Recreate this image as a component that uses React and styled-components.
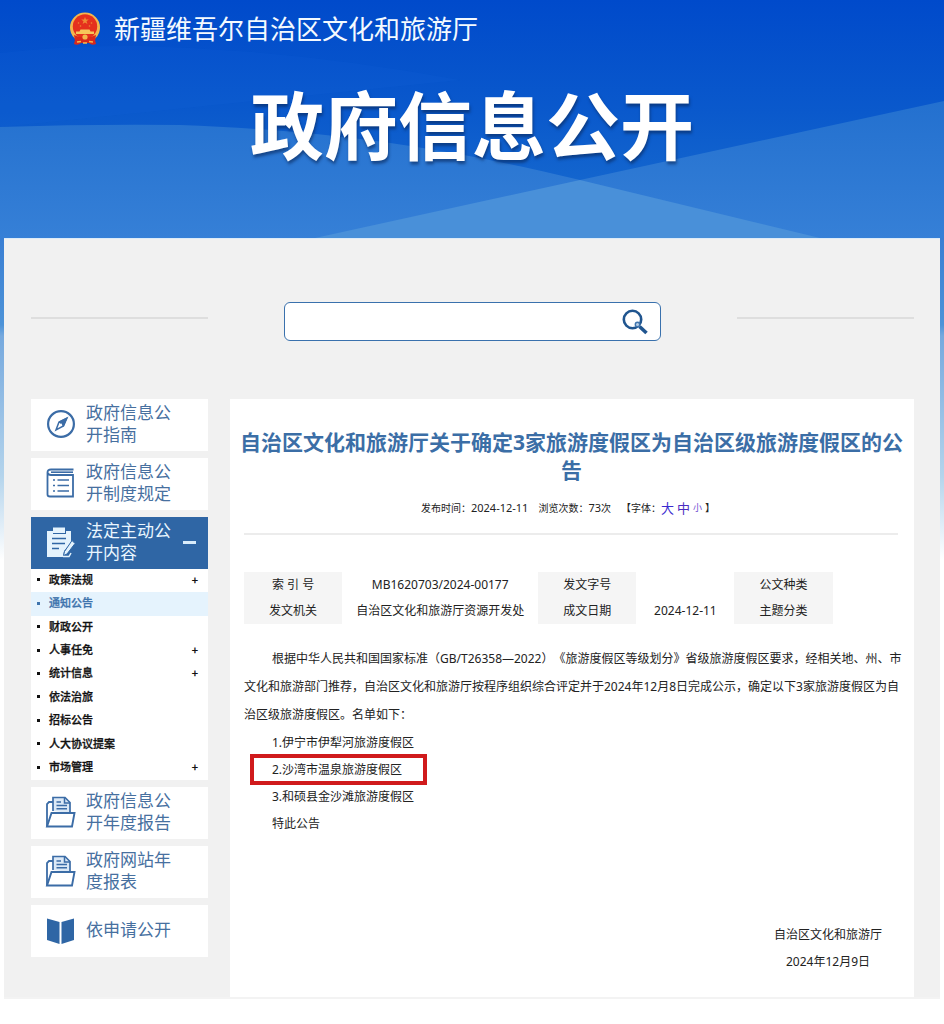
import React, { useState } from "react";
import styled, { createGlobalStyle, css } from "styled-components";

const GlobalStyle = createGlobalStyle`
  *, *::before, *::after { box-sizing: border-box; }
  body {
    margin: 0;
    background: #fff;
    color: #222;
    font-family: "Noto Sans", "Noto Sans CJK SC", sans-serif;
    font-size: 12px;
    text-spacing-trim: space-all;
  }
  a { color: inherit; text-decoration: none; }
  h1, h2, p, ul, ol { margin: 0; padding: 0; }
  ul, ol { list-style: none; }
`;

const Page = styled.div`
  position: relative;
  isolation: isolate;
  padding-bottom: 26px;
`;

const Backdrop = styled.svg`
  position: absolute;
  z-index: -1;
  top: 0;
  left: 0;
  width: 100%;
  height: 560px;
  display: block;
`;

const Header = styled.header`
  height: 238px;
  padding-top: 11px;
  color: #fff;
`;

const SiteLink = styled.a`
  display: flex;
  align-items: center;
  gap: 13px;
  height: 36px;
  padding-left: 69px;
  font-size: 26px;
  line-height: 36px;
  color: #f4faff;
`;

const Banner = styled.h1`
  padding-top: 24px;
  font-size: 74px;
  line-height: 110px;
  font-weight: 700;
  text-align: center;
  text-shadow: 1px 3px 3px rgba(10, 40, 90, 0.6);
`;

const Panel = styled.div`
  margin: 0 4px;
  padding: 63px 26px 0 27px;
  background: #f1f1f1;
  border-top: 1px solid #dcebf8;
  border-bottom: 2px solid #f3f3f3;
`;

const SearchRow = styled.div`
  display: grid;
  grid-template-columns: 177px minmax(0, 377px) 177px;
  justify-content: space-between;
  align-items: center;
  margin-bottom: 58px;
`;

const Rule = styled.div`
  height: 2px;
  margin-bottom: 8px;
  background: #dedede;
`;

const SearchBox = styled.form`
  display: flex;
  align-items: center;
  height: 39px;
  padding-right: 11px;
  background: #fff;
  border: 1px solid #3a71ad;
  border-radius: 6px;
`;

const SearchInput = styled.input`
  flex: 1;
  min-width: 0;
  height: 100%;
  padding: 0 12px;
  border: 0;
  outline: 0;
  background: transparent;
  font: inherit;
  font-size: 14px;
`;

const IconButton = styled.button`
  display: flex;
  padding: 0;
  border: 0;
  background: none;
  cursor: pointer;
`;

const Columns = styled.div`
  display: grid;
  grid-template-columns: 177px minmax(0, 1fr);
  gap: 22px;
`;

const SideNav = styled.nav`
  display: flex;
  flex-direction: column;
  gap: 7px;
`;

const cardStyle = css`
  display: flex;
  align-items: center;
  gap: 9px;
  width: 100%;
  height: 52px;
  padding: 0 10px 2px 14px;
  border: 0;
  font-family: inherit;
  font-size: 17px;
  line-height: 22px;
  text-align: left;
`;

const NavCard = styled.a`
  ${cardStyle}
  background: #fff;
  color: #47709f;
`;

const NavToggle = styled.button`
  ${cardStyle}
  background: #2f66a5;
  color: #eaf6ff;
  cursor: pointer;
`;

const NavLabel = styled.span`
  width: 88px;
  white-space: pre-line;
`;

const NavIcon = styled.svg`
  flex: none;
  width: 32px;
  height: 32px;
  fill: none;
  stroke: currentColor;
  color: ${(p) => p.$color || "#3b6ca6"};
`;

const Minus = styled.span`
  width: 13px;
  height: 3px;
  background: #d9ecfb;
`;

const SubList = styled.ul`
  display: grid;
  grid-auto-rows: 1fr;
  min-height: 211px;
  background: #fff;
`;

const SubLink = styled.a`
  display: flex;
  align-items: center;
  height: 100%;
  padding: 0 10px 2px 6px;
  font-size: 11px;
  line-height: 20px;
  font-weight: 500;
  color: ${(p) => (p.$current ? "#3f74ad" : "#111")};
  background: ${(p) => (p.$current ? "#e5f3fd" : "transparent")};
  -webkit-text-stroke: 0.3px currentColor;

  &::before {
    content: "";
    width: 3px;
    height: 3px;
    margin-right: 9px;
    background: currentColor;
  }
`;

const Plus = styled.span`
  margin-left: auto;
`;

const Article = styled.main`
  display: flex;
  flex-direction: column;
  padding: 29px 11px 22px 14px;
  background: #fff;
`;

const Title = styled.h2`
  margin: 0 -6px 0 -10px;
  font-size: 21px;
  line-height: 28px;
  font-weight: 700;
  text-align: center;
  color: #3b6ea6;
`;

const Meta = styled.div`
  display: flex;
  justify-content: center;
  align-items: center;
  gap: 10px;
  height: 51px;
  margin-right: 5px;
  padding: 0 6px 2px 0;
  font-size: 10px;
  line-height: 20px;
  border-bottom: 2px solid #ececec;
`;

const Num = styled.span`
  font-size: 11px;
`;

const SizeGroup = styled.span`
  display: flex;
  align-items: center;
`;

const SizeButton = styled.button`
  padding: 0;
  margin-right: 3px;
  border: 0;
  background: none;
  font-family: inherit;
  font-size: ${(p) => p.$size}px;
  line-height: 20px;
  color: ${(p) => p.$color};
  cursor: pointer;
`;

const InfoTable = styled.table`
  width: calc(100% - 5px);
  margin: 37px 0 21px;
  table-layout: fixed;
  border-collapse: collapse;
  line-height: 20px;
  text-align: center;

  th, td {
    height: 26px;
    padding: 0;
    font-weight: 400;
    white-space: nowrap;
  }
  th { background: #f5f5f5; }
`;

const Paragraph = styled.p`
  line-height: 28px;
  text-indent: 28px;
`;

const Lines = styled.ol`
  padding-left: 28px;
  line-height: 27px;
`;

const Marked = styled.span`
  position: relative;
  display: inline-block;

  &::after {
    content: "";
    position: absolute;
    inset: -2px -25px -2px -22px;
    border: 4px solid #d01a1c;
  }
`;

const Signature = styled.div`
  align-self: flex-end;
  margin: 84px 21px 0 0;
  line-height: 27px;
  text-align: center;
`;

function BackdropArt() {
  return (
    <Backdrop viewBox="0 0 944 560" preserveAspectRatio="none" aria-hidden="true">
      <defs>
        <linearGradient id="sky" gradientUnits="userSpaceOnUse" x1="0" y1="0" x2="0" y2="560">
          <stop offset="0" stopColor="#004acb" />
          <stop offset="0.2" stopColor="#0a59cc" />
          <stop offset="0.32" stopColor="#1365ce" />
          <stop offset="0.43" stopColor="#3a7fd3" />
          <stop offset="0.58" stopColor="#4d93d8" />
          <stop offset="0.6" stopColor="#76a9de" />
          <stop offset="0.85" stopColor="#b4d4ec" />
          <stop offset="1" stopColor="#fff" />
        </linearGradient>
        <linearGradient id="fold" gradientUnits="userSpaceOnUse" x1="0" y1="100" x2="0" y2="240">
          <stop offset="0" stopColor="#2370cf" />
          <stop offset="1" stopColor="#3680d7" />
        </linearGradient>
      </defs>
      <rect width="944" height="560" fill="url(#sky)" />
      <path d="M0 53Q70 45 140 46Q300 50 460 80L0 127Z" fill="#1a6ae0" opacity=".1" />
      <path d="M0 127Q90 124 180 125C320 130 440 146 580 180L820 238H0Z" fill="url(#fold)" />
      <path d="M944 101L580 180L315 238H944Z" fill="url(#fold)" />
      <path d="M580 180L820 238H315Z" fill="#4990d9" />
    </Backdrop>
  );
}

function Emblem() {
  return (
    <svg width="32" height="34" viewBox="0 0 32 34" aria-hidden="true">
      <path d="M7 24L5 32Q9 34 12 31H20Q23 34 27 32L25 24Z" fill="#d8281c" />
      <circle cx="16" cy="15.500" r="15" fill="#f3b64c" />
      <circle cx="16" cy="14.500" r="12.200" fill="#e5301d" />
      <path d="M16 5L17 7.600H19.800L17.500 9.300L18.400 12L16 10.400L13.600 12L14.500 9.300L12.200 7.600H15Z" fill="#ee8a35" />
      <g fill="#ee8a35">
        <circle cx="9.500" cy="11" r="0.800" /><circle cx="22.500" cy="11" r="0.800" />
        <circle cx="11.500" cy="14" r="0.800" /><circle cx="20.500" cy="14" r="0.800" />
      </g>
      <path d="M11.500 17.500H20.500L21.500 19.500H25V22H7V19.500H10.500Z" fill="#f6c65a" />
      <path d="M5 23Q16 28 27 23L26 29Q16 32 6 29Z" fill="#d8281c" />
      <circle cx="16" cy="25" r="2.600" fill="#f3b64c" />
      <path d="M8 30L12 29.500M14 31H18M20 29.500L24 30" stroke="#f6b84a" strokeWidth="1.500" />
    </svg>
  );
}

function SearchGlyph() {
  return (
    <svg width="28" height="28" viewBox="0 0 28 28" fill="none" aria-hidden="true">
      <circle cx="11.500" cy="11.500" r="8.700" stroke="#20558f" strokeWidth="2.600" />
      <path d="M18.500 18.500L25.500 25" stroke="#20558f" strokeWidth="3.600" />
      <circle cx="16.500" cy="16.500" r="2.200" fill="#b9d0e6" stroke="#3f74ad" strokeWidth="1.400" />
    </svg>
  );
}

const icons = {
  compass: (
    <>
      <circle cx="16" cy="16" r="12.900" strokeWidth="2.200" />
      <path d="M22 10L18.500 18L11 22L14 14Z" strokeWidth="1.500" />
      <path d="M22 10L18.500 18L14 14Z" fill="currentColor" />
      <circle cx="16" cy="16.500" r="1" fill="#fff" stroke="none" />
    </>
  ),
  book: (
    <>
      <path d="M28.500 2.500H6Q2.500 2.500 2.500 5.500V27.500Q2.500 29.500 5 29.500H28V8H6Q3 8 2.500 5.500" strokeWidth="1.800" />
      <path d="M6 5.200H28" strokeWidth="1.600" />
      <path d="M8 13H10M12.500 13H24M8 18.500H10M12.500 18.500H24M8 24H10M12.500 24H24" strokeWidth="1.700" />
    </>
  ),
  clipboard: (
    <>
      <path d="M2 5H8V8H21V5H26V17L19 25L18 31H2Z" fill="currentColor" stroke="none" />
      <path d="M8 1.500H20V7H8Z" fill="currentColor" stroke="none" />
      <path d="M7 12.500H21M7 17.500H20M7 22.500H14" stroke="#2f66a5" strokeWidth="1.500" />
      <path d="M27 14.500L30 17.500L22 28L18.500 29.500L19.500 25.500Z" fill="currentColor" stroke="#2f66a5" strokeWidth="1" />
      <path d="M18 30.500H24L26 27" strokeWidth="1.500" />
    </>
  ),
  folder: (
    <>
      <path d="M8 15V1.500H20L25 6.500V17" fill="#dce9f6" strokeWidth="1.700" />
      <path d="M19.500 2V7H25" strokeWidth="1.500" />
      <path d="M11.500 6H16M11.500 9.500H22M11.500 12.800H22" strokeWidth="1.500" />
      <path d="M8 6H4L2 8V30.500" strokeWidth="1.800" />
      <path d="M6.500 17H29.500L27 30.500H2Z" fill="#fff" strokeWidth="1.900" />
    </>
  ),
  openBook: (
    <>
      <path d="M2 4.500L14.500 8V30L2 26Z" fill="#2f66a5" stroke="none" />
      <path d="M29 4.500L16.500 8V30L29 26Z" fill="#2f66a5" stroke="none" />
    </>
  ),
};

function CardIcon({ name, color }) {
  return (
    <NavIcon viewBox="0 0 32 32" $color={color} aria-hidden="true">
      {icons[name]}
    </NavIcon>
  );
}

function Card({ icon, label }) {
  return (
    <NavCard href="#">
      <CardIcon name={icon} />
      <NavLabel>{label}</NavLabel>
    </NavCard>
  );
}

const subItems = [
  { label: "政策法规", more: true },
  { label: "通知公告", current: true },
  { label: "财政公开" },
  { label: "人事任免", more: true },
  { label: "统计信息", more: true },
  { label: "依法治旅" },
  { label: "招标公告" },
  { label: "人大协议提案" },
  { label: "市场管理", more: true },
];

function Sidebar() {
  const [open, setOpen] = useState(true);
  return (
    <SideNav aria-label="政府信息公开">
      <Card icon="compass" label={"政府信息公\n开指南"} />
      <Card icon="book" label={"政府信息公\n开制度规定"} />
      <div>
        <NavToggle type="button" aria-expanded={open} onClick={() => setOpen(!open)}>
          <CardIcon name="clipboard" color="#e4f3fd" />
          <NavLabel>{"法定主动公\n开内容"}</NavLabel>
          <Minus />
        </NavToggle>
        {open && (
          <SubList>
            {subItems.map((item) => (
              <li key={item.label}>
                <SubLink href="#" $current={item.current}>
                  {item.label}
                  {item.more && <Plus>+</Plus>}
                </SubLink>
              </li>
            ))}
          </SubList>
        )}
      </div>
      <Card icon="folder" label={"政府信息公\n开年度报告"} />
      <Card icon="folder" label={"政府网站年\n度报表"} />
      <Card icon="openBook" label="依申请公开" />
    </SideNav>
  );
}

export default function App() {
  return (
    <>
      <GlobalStyle />
      <Page lang="zh-CN">
        <BackdropArt />
        <Header>
          <SiteLink href="#">
            <Emblem />
            新疆维吾尔自治区文化和旅游厅
          </SiteLink>
          <Banner>政府信息公开</Banner>
        </Header>
        <Panel>
          <SearchRow>
            <Rule />
            <SearchBox role="search" onSubmit={(e) => e.preventDefault()}>
              <SearchInput type="text" aria-label="搜索" />
              <IconButton type="submit" aria-label="搜索">
                <SearchGlyph />
              </IconButton>
            </SearchBox>
            <Rule />
          </SearchRow>
          <Columns>
            <Sidebar />
            <Article>
              <Title>自治区文化和旅游厅关于确定3家旅游度假区为自治区级旅游度假区的公告</Title>
              <Meta>
                <span>发布时间：<Num>2024-12-11</Num></span>
                <span>浏览次数：<Num>73</Num>次</span>
                <SizeGroup>
                  【字体：
                  <SizeButton type="button" $size={13} $color="#3a2bd0">大</SizeButton>
                  <SizeButton type="button" $size={13} $color="#4a2bc0">中</SizeButton>
                  <SizeButton type="button" $size={9} $color="#6a4bd0">小</SizeButton>
                  】
                </SizeGroup>
              </Meta>
              <InfoTable>
                <colgroup>
                  <col width="15%" />
                  <col width="30%" />
                  <col width="15%" />
                  <col width="15%" />
                  <col width="15%" />
                  <col width="10%" />
                </colgroup>
                <tbody>
                  <tr>
                    <th scope="row">索 引 号</th>
                    <td>MB1620703/2024-00177</td>
                    <th scope="row">发文字号</th>
                    <td />
                    <th scope="row">公文种类</th>
                    <td />
                  </tr>
                  <tr>
                    <th scope="row">发文机关</th>
                    <td>自治区文化和旅游厅资源开发处</td>
                    <th scope="row">成文日期</th>
                    <td>2024-12-11</td>
                    <th scope="row">主题分类</th>
                    <td />
                  </tr>
                </tbody>
              </InfoTable>
              <Paragraph>
                根据中华人民共和国国家标准（GB/T26358—2022）《旅游度假区等级划分》省级旅游度假区要求，经相关地、州、市文化和旅游部门推荐，自治区文化和旅游厅按程序组织综合评定并于2024年12月8日完成公示，确定以下3家旅游度假区为自治区级旅游度假区。名单如下：
              </Paragraph>
              <Lines>
                <li>1.伊宁市伊犁河旅游度假区</li>
                <li><Marked>2.沙湾市温泉旅游度假区</Marked></li>
                <li>3.和硕县金沙滩旅游度假区</li>
                <li>特此公告</li>
              </Lines>
              <Signature>
                <p>自治区文化和旅游厅</p>
                <p>2024年12月9日</p>
              </Signature>
            </Article>
          </Columns>
        </Panel>
      </Page>
    </>
  );
}
